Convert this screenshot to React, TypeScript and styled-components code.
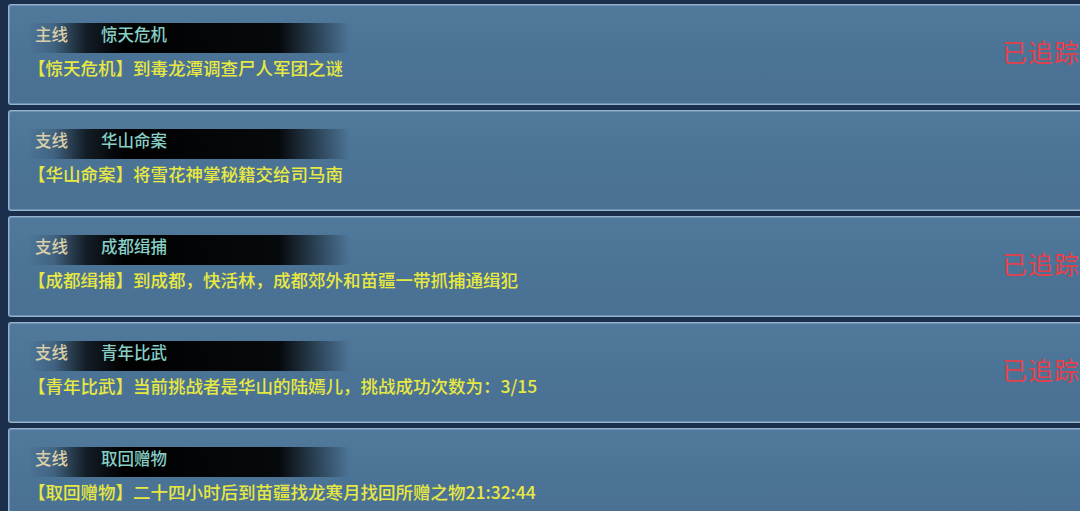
import React from 'react';
import styled, { createGlobalStyle } from 'styled-components';

const GlobalStyle = createGlobalStyle`
  html, body {
    margin: 0;
    padding: 0;
    background: #1b2f4c;
    overflow: hidden;
  }
  body {
    font-family: 'Noto Sans CJK SC', 'Noto Sans', sans-serif;
  }
`;

// 任务列表
const QuestList = styled.div`
  display: flex;
  flex-direction: column;
  gap: 5px;
  padding: 4px 0 0 8px;
  height: 511px;
  box-sizing: border-box;
  overflow: hidden;
`;

// 任务卡片
const Card = styled.div`
  flex: 0 0 auto;
  display: grid;
  grid-template-columns: 1fr 80px;
  align-items: center;
  height: 101px;
  box-sizing: border-box;
  border: 1px solid #93b3cf;
  border-right: none;
  border-radius: 3px 0 0 3px;
  background: linear-gradient(180deg, #50799c 0%, #4b7396 50%, #4a7194 100%);
  box-shadow: inset 1px 1px 0 #6f92b2, inset 0 -1px 0 #6f92b2;
  overflow: hidden;
`;

const Body = styled.div`
  display: flex;
  flex-direction: column;
  align-self: start;
  padding-top: 18px;
`;

// 标题栏（黑色渐变）
const HeaderBand = styled.div`
  display: flex;
  align-items: center;
  width: 322px;
  height: 30px;
  margin-left: 19px;
  padding: 0 0 8px 7px;
  box-sizing: border-box;
  background: linear-gradient(
    90deg,
    rgba(0, 0, 0, 0) 0%,
    rgba(0, 0, 0, 0.15) 8%,
    rgba(0, 0, 0, 0.75) 18%,
    #000 30%,
    rgba(0, 0, 0, 0.92) 78%,
    rgba(0, 0, 0, 0) 100%
  );
  font-size: 16.5px;
  font-weight: 500;
  line-height: 24px;
`;

const Kind = styled.span`
  width: 66px;
  color: #dacfa8;
`;

const Title = styled.span`
  color: #86cec6;
`;

const Desc = styled.div`
  margin: 3px 0 0 19px;
  font-size: 17.5px;
  font-weight: 500;
  line-height: 24px;
  color: #e8e842;
  white-space: nowrap;
`;

const Tracked = styled.div`
  padding: 0 0 7px 2px;
  font-size: 25px;
  letter-spacing: 1px;
  color: #e4404c;
  white-space: nowrap;
`;

interface Quest {
  kind: string;
  title: string;
  desc: string;
  tracked: boolean;
}

const quests: Quest[] = [
  { kind: '主线', title: '惊天危机', desc: '【惊天危机】到毒龙潭调查尸人军团之谜', tracked: true },
  { kind: '支线', title: '华山命案', desc: '【华山命案】将雪花神掌秘籍交给司马南', tracked: false },
  { kind: '支线', title: '成都缉捕', desc: '【成都缉捕】到成都，快活林，成都郊外和苗疆一带抓捕通缉犯', tracked: true },
  { kind: '支线', title: '青年比武', desc: '【青年比武】当前挑战者是华山的陆嫣儿，挑战成功次数为：3/15', tracked: true },
  { kind: '支线', title: '取回赠物', desc: '【取回赠物】二十四小时后到苗疆找龙寒月找回所赠之物21:32:44', tracked: false },
];

const App = () => {
  return (
    <>
      <GlobalStyle />
      <QuestList>
        {quests.map((q) => (
          <Card key={q.title}>
            <Body>
              <HeaderBand>
                <Kind>{q.kind}</Kind>
                <Title>{q.title}</Title>
              </HeaderBand>
              <Desc>{q.desc}</Desc>
            </Body>
            <Tracked>{q.tracked ? '已追踪' : ''}</Tracked>
          </Card>
        ))}
      </QuestList>
    </>
  );
};

export default App;
